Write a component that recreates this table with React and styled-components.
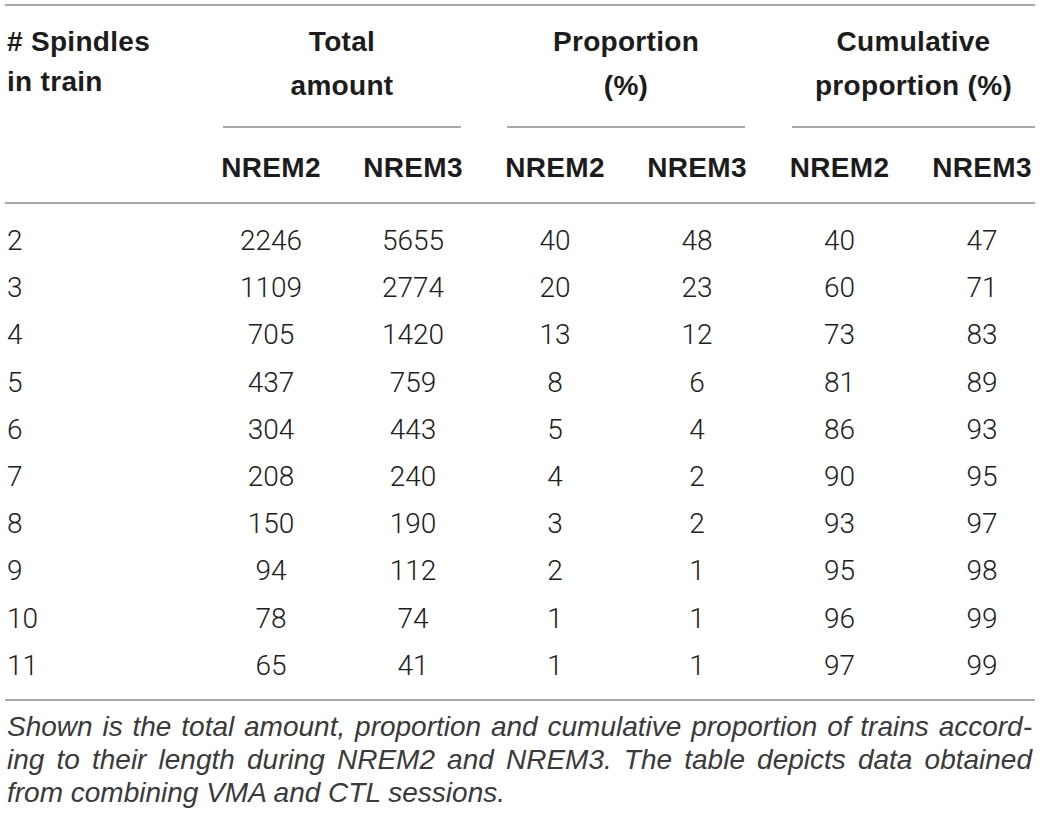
import React from 'react';
import styled, { createGlobalStyle } from 'styled-components';

const GlobalStyle = createGlobalStyle`
  html, body {
    margin: 0;
    padding: 0;
    background: #ffffff;
  }
  body {
    font-family: "Liberation Sans", Arial, sans-serif;
    color: #1d1d1d;
  }
`;

const COLS = '195px 142px 142px 142px 142px 143px 124px';
const RULE = '2px solid #a8a8a8';

const Page = styled.div`
  width: 1030px;
  padding: 4px 0 0 5px;
`;

const Head = styled.div`
  display: grid;
  grid-template-columns: ${COLS};
  border-top: ${RULE};
  font-family: "Liberation Sans", Arial, sans-serif;
  font-weight: 700;
  font-size: 28px;
  letter-spacing: 0.3px;
  color: #1c1c1c;
`;

const StubHeader = styled.div`
  grid-row: 1 / span 2;
  padding: 16px 0 0 2px;
  line-height: 40px;
`;

const GroupHeader = styled.div`
  grid-column: span 2;
  margin: 0 ${(p) => (p.$last ? '0' : '23px')} 0 ${(p) => (p.$last ? '24px' : '23px')};
  padding: 14px 0 18px;
  line-height: 44px;
  text-align: center;
  border-bottom: ${RULE};
`;

const SubHeader = styled.div`
  padding: 20px 0 14px ${(p) => (p.$last ? '18px' : '0')};
  line-height: 40px;
  text-align: center;
`;

const Body = styled.div`
  display: grid;
  grid-template-columns: ${COLS};
  border-top: ${RULE};
  border-bottom: ${RULE};
  padding: 13px 0 10px;
  font-family: Roboto, "Liberation Sans", sans-serif;
  font-weight: 300;
  font-size: 28px;
  color: #202020;
`;

const Cell = styled.div`
  line-height: 47.2px;
  text-align: ${(p) => (p.$stub ? 'left' : 'center')};
  padding-left: ${(p) => (p.$stub ? '2px' : p.$last ? '18px' : '0')};
`;

const Caption = styled.div`
  padding: 9px 3px 0 2px;
  font-family: "Liberation Sans Narrow", "Liberation Sans", sans-serif;
  font-style: italic;
  font-size: 28px;
  line-height: 33px;
  color: #3a3a3a;
`;

const CaptionLine = styled.span`
  display: block;
  text-align: justify;
  text-align-last: ${(p) => (p.$end ? 'left' : 'justify')};
`;

const rows = [
  ['2', '2246', '5655', '40', '48', '40', '47'],
  ['3', '1109', '2774', '20', '23', '60', '71'],
  ['4', '705', '1420', '13', '12', '73', '83'],
  ['5', '437', '759', '8', '6', '81', '89'],
  ['6', '304', '443', '5', '4', '86', '93'],
  ['7', '208', '240', '4', '2', '90', '95'],
  ['8', '150', '190', '3', '2', '93', '97'],
  ['9', '94', '112', '2', '1', '95', '98'],
  ['10', '78', '74', '1', '1', '96', '99'],
  ['11', '65', '41', '1', '1', '97', '99'],
];

const groups = [
  ['Total', 'amount'],
  ['Proportion', '(%)'],
  ['Cumulative', 'proportion (%)'],
];

export default function App() {
  return (
    <>
      <GlobalStyle />
      <Page>
        <Head>
          <StubHeader>
            # Spindles
            <br />
            in train
          </StubHeader>
          {groups.map(([a, b], i) => (
            <GroupHeader key={a} $last={i === groups.length - 1}>
              {a}
              <br />
              {b}
            </GroupHeader>
          ))}
          {groups.flatMap((g, i) =>
            ['NREM2', 'NREM3'].map((s, j) => (
              <SubHeader key={g[0] + s} $last={i === 2 && j === 1}>
                {s}
              </SubHeader>
            ))
          )}
        </Head>
        <Body>
          {rows.flatMap((r) =>
            r.map((v, k) => (
              <Cell key={r[0] + '-' + k} $stub={k === 0} $last={k === 6}>
                {v}
              </Cell>
            ))
          )}
        </Body>
        <Caption>
          <CaptionLine>
            Shown is the total amount, proportion and cumulative proportion of trains accord-
          </CaptionLine>
          <CaptionLine>
            ing to their length during NREM2 and NREM3. The table depicts data obtained
          </CaptionLine>
          <CaptionLine $end>from combining VMA and CTL sessions.</CaptionLine>
        </Caption>
      </Page>
    </>
  );
}
